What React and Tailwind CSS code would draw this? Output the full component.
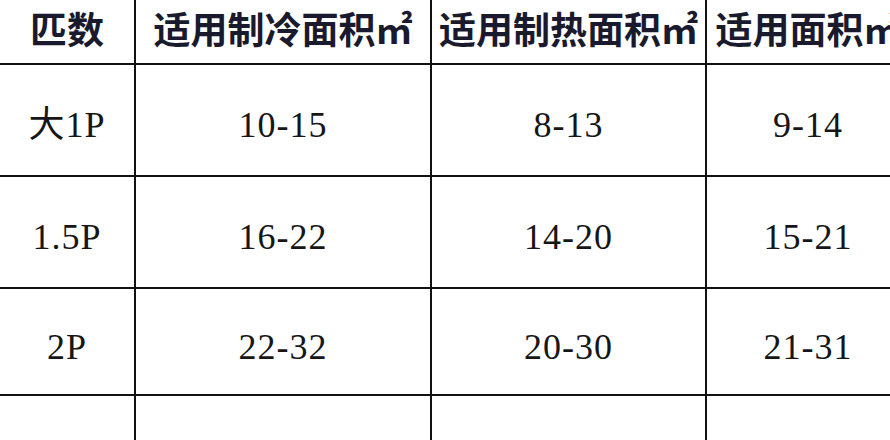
import React from "react";

const headers = ["匹数", "适用制冷面积㎡", "适用制热面积㎡", "适用面积㎡"];

const rows = [
  { h: "h-[112px]", cells: ["大1P", "10-15", "8-13", "9-14"] },
  { h: "h-[112px]", cells: ["1.5P", "16-22", "14-20", "15-21"] },
  { h: "h-[107px]", cells: ["2P", "22-32", "20-30", "21-31"] },
  // next row starts below the visible area
  { h: "h-[112px]", cells: ["", "", "", ""] },
];

const cols = ["w-[136px]", "w-[296px]", "w-[275px]", "w-[204px]"];

export default function App() {
  return (
    <div className="w-[890px] h-[440px] overflow-hidden bg-white">
      <div className="w-[911px]">
        {/* header */}
        <div className="flex h-[65px]">
          {headers.map((t, i) => (
            <div
              key={t}
              className={`${cols[i]} shrink-0 flex items-center justify-center pb-[6px] border-b-2 border-r-2 border-[#111] text-[37px] leading-none font-bold text-[#1a1a2e] whitespace-nowrap`}
              style={{ fontFamily: '"Noto Sans CJK SC", sans-serif' }}
            >
              {t}
            </div>
          ))}
        </div>

        {/* body rows */}
        {rows.map((r, ri) => (
          <div key={ri} className={`flex ${r.h}`}>
            {r.cells.map((c, i) => (
              <div
                key={i}
                className={`${cols[i]} shrink-0 flex items-center justify-center pt-[10px] border-b-2 border-r-2 border-[#111] text-[36px] leading-none text-[#161616] tracking-[1px] whitespace-nowrap`}
                style={{ fontFamily: '"Liberation Serif", "Noto Sans CJK SC", serif' }}
              >
                {c}
              </div>
            ))}
          </div>
        ))}
      </div>
    </div>
  );
}
